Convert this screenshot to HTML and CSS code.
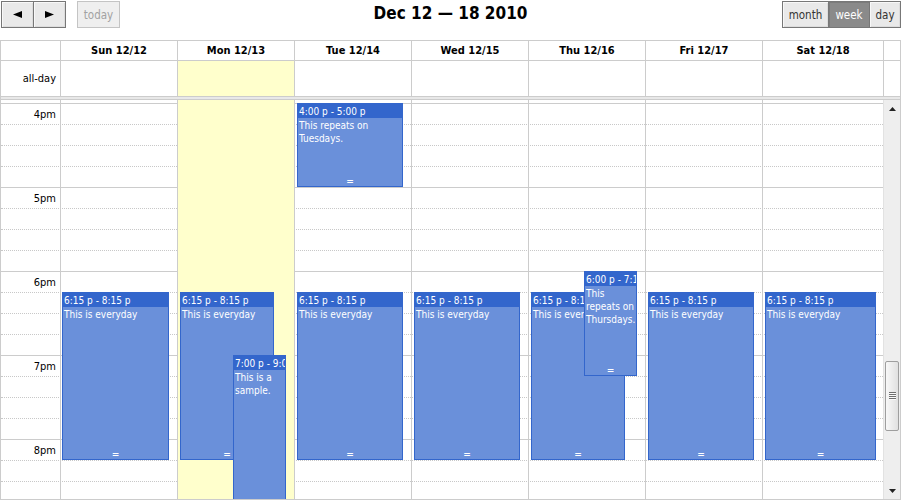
FILE: index.html
```html
<!DOCTYPE html>
<html>
<head>
<meta charset="utf-8">
<title>Calendar</title>
<link rel="stylesheet" href="styles.css">
</head>
<body>
<div class="cal">
  <div class="toolbar">
    <div class="tb-left">
      <div class="group">
        <button class="btn arrow"><svg width="9" height="7" viewBox="0 0 9 7"><polygon points="0,3.5 9,0 9,7" fill="#000"/></svg></button>
        <button class="btn arrow"><svg width="9" height="7" viewBox="0 0 9 7"><polygon points="9,3.5 0,0 0,7" fill="#000"/></svg></button>
      </div>
      <button class="btn btn-today" disabled>today</button>
    </div>
    <h2 class="title">Dec 12 — 18 2010</h2>
    <div class="tb-right group">
      <button class="btn btn-month">month</button>
      <button class="btn btn-week active">week</button>
      <button class="btn btn-day">day</button>
    </div>
  </div>

  <div class="view">
    <div class="row head">
      <div class="axis"></div>
      <div class="cell">Sun 12/12</div>
      <div class="cell">Mon 12/13</div>
      <div class="cell">Tue 12/14</div>
      <div class="cell">Wed 12/15</div>
      <div class="cell">Thu 12/16</div>
      <div class="cell">Fri 12/17</div>
      <div class="cell">Sat 12/18</div>
      <div class="gutter"></div>
    </div>
    <div class="row allday">
      <div class="axis">all-day</div>
      <div class="cell"></div>
      <div class="cell is-today"></div>
      <div class="cell"></div>
      <div class="cell"></div>
      <div class="cell"></div>
      <div class="cell"></div>
      <div class="cell"></div>
      <div class="gutter"></div>
    </div>
    <div class="divider"></div>

    <div class="body">
      <div class="scroller">
        <div class="slots">
          <div class="slot partial"></div>
          <div class="slot hour"><span class="label">4pm</span></div>
          <div class="slot"></div>
          <div class="slot"></div>
          <div class="slot"></div>
          <div class="slot hour"><span class="label">5pm</span></div>
          <div class="slot"></div>
          <div class="slot"></div>
          <div class="slot"></div>
          <div class="slot hour"><span class="label">6pm</span></div>
          <div class="slot"></div>
          <div class="slot"></div>
          <div class="slot"></div>
          <div class="slot hour"><span class="label">7pm</span></div>
          <div class="slot"></div>
          <div class="slot"></div>
          <div class="slot"></div>
          <div class="slot hour"><span class="label">8pm</span></div>
          <div class="slot"></div>
          <div class="slot"></div>
        </div>

        <div class="cols">
          <div class="axis-space"></div>
          <div class="daycol">
            <div class="ev" style="top:192px;height:168px;left:1px;width:107px">
              <div class="ev-time">6:15 p - 8:15 p</div>
              <div class="ev-title">This is everyday</div>
              <div class="ev-handle">=</div>
            </div>
          </div>
          <div class="daycol is-today">
            <div class="ev" style="top:192px;height:168px;left:2px;width:94px">
              <div class="ev-time">6:15 p - 8:15 p</div>
              <div class="ev-title">This is everyday</div>
              <div class="ev-handle">=</div>
            </div>
            <div class="ev" style="top:255px;height:168px;left:55px;width:53px">
              <div class="ev-time">7:00 p - 9:00 p</div>
              <div class="ev-title">This is a sample.</div>
              <div class="ev-handle">=</div>
            </div>
          </div>
          <div class="daycol">
            <div class="ev" style="top:3px;height:84px;left:2px;width:106px">
              <div class="ev-time">4:00 p - 5:00 p</div>
              <div class="ev-title">This repeats on Tuesdays.</div>
              <div class="ev-handle">=</div>
            </div>
            <div class="ev" style="top:192px;height:168px;left:2px;width:106px">
              <div class="ev-time">6:15 p - 8:15 p</div>
              <div class="ev-title">This is everyday</div>
              <div class="ev-handle">=</div>
            </div>
          </div>
          <div class="daycol">
            <div class="ev" style="top:192px;height:168px;left:2px;width:106px">
              <div class="ev-time">6:15 p - 8:15 p</div>
              <div class="ev-title">This is everyday</div>
              <div class="ev-handle">=</div>
            </div>
          </div>
          <div class="daycol">
            <div class="ev" style="top:192px;height:168px;left:2px;width:94px">
              <div class="ev-time">6:15 p - 8:15 p</div>
              <div class="ev-title">This is everyday</div>
              <div class="ev-handle">=</div>
            </div>
            <div class="ev" style="top:171px;height:105px;left:55px;width:53px">
              <div class="ev-time">6:00 p - 7:15 p</div>
              <div class="ev-title">This repeats on Thursdays.</div>
              <div class="ev-handle">=</div>
            </div>
          </div>
          <div class="daycol">
            <div class="ev" style="top:192px;height:168px;left:2px;width:106px">
              <div class="ev-time">6:15 p - 8:15 p</div>
              <div class="ev-title">This is everyday</div>
              <div class="ev-handle">=</div>
            </div>
          </div>
          <div class="daycol">
            <div class="ev" style="top:192px;height:168px;left:2px;width:111px">
              <div class="ev-time">6:15 p - 8:15 p</div>
              <div class="ev-title">This is everyday</div>
              <div class="ev-handle">=</div>
            </div>
          </div>
        </div>
      </div>

      <div class="scrollbar">
        <div class="sb-btn"><svg width="7" height="4" viewBox="0 0 7 4"><polygon points="0,4 3.5,0 7,4" fill="#222"/></svg></div>
        <div class="sb-track">
          <div class="sb-thumb"><div class="sb-grip"></div></div>
        </div>
        <div class="sb-btn"><svg width="7" height="4" viewBox="0 0 7 4"><polygon points="0,0 3.5,4 7,0" fill="#222"/></svg></div>
      </div>
    </div>
  </div>
</div>
</body>
</html>
```

FILE: styles.css
```css
* {
  box-sizing: border-box;
}

html,
body {
  margin: 0;
  padding: 0;
  background: #fff;
}

body {
  font-family: "DejaVu Sans Condensed", "DejaVu Sans", sans-serif;
  font-stretch: condensed;
  font-size: 11px;
  color: #000;
}

.cal {
  width: 901px;
}

/* ---------- toolbar ---------- */
.toolbar {
  display: grid;
  grid-template-columns: 1fr auto 1fr;
  align-items: start;
  height: 40px;
  padding-top: 1px;
}

.tb-left {
  display: flex;
  gap: 11px;
  padding-left: 1px;
}

.tb-right {
  justify-self: end;
}

.group {
  display: flex;
}

.btn {
  height: 27px;
  margin: 0;
  padding: 0;
  border: 1px solid #777;
  background: #e9e9e9;
  box-shadow: inset 1px 1px 0 #f8f8f8, inset -1px -1px 0 #dcdcdc;
  font-family: "DejaVu Sans Condensed", "DejaVu Sans", sans-serif;
  font-stretch: condensed;
  font-size: 11.5px;
  color: #333;
  text-align: center;
  display: flex;
  align-items: center;
  justify-content: center;
}

.group .btn + .btn {
  margin-left: -1px;
}

.arrow {
  width: 33px;
}

.btn-today {
  width: 43px;
  border-color: #c4c4c4;
  background: #efefef;
  color: #a2a2a2;
  box-shadow: none;
}

.btn-month {
  width: 47px;
}

.btn-week {
  width: 42px;
}

.btn-day {
  width: 32px;
}

.btn.active {
  background: #8a8a8a;
  color: #fff;
  box-shadow: inset 1px 1px 0 #7c7c7c;
}

.title {
  margin: -1px 0 0;
  font-size: 17px;
  font-weight: bold;
  line-height: 26px;
  color: #000;
}

/* ---------- view ---------- */
.view {
  width: 901px;
  border: 1px solid #ccc;
}

.row {
  display: grid;
  grid-template-columns: 59px repeat(6, 117px) 121px 17px;
}

.row > div + div {
  border-left: 1px solid #ccc;
}

.head {
  height: 20px;
  border-bottom: 1px solid #ccc;
}

.head .cell {
  font-weight: bold;
  text-align: center;
  line-height: 19px;
}

.allday {
  height: 36px;
  border-bottom: 1px solid #ccc;
}

.axis {
  text-align: right;
  padding-right: 4px;
  line-height: 35px;
}

.cell.is-today {
  background: #ffc;
}

.divider {
  height: 3px;
  background: #e8e8e8;
  border-bottom: 1px solid #ccc;
}

.body {
  display: flex;
  height: 399px;
}

.scroller {
  width: 882px;
  height: 399px;
  overflow: hidden;
  display: grid;
  grid-template-columns: 59px repeat(6, 117px) 121px;
  grid-template-rows: 399px;
}

.slots {
  grid-area: 1 / 1 / 2 / -1;
}

.slot {
  height: 21px;
  border-top: 1px dotted #c8c8c8;
}

.slot.hour {
  border-top: 1px solid #ccc;
}

.slot.partial {
  height: 3px;
  border-top: none;
}

.label {
  display: block;
  width: 59px;
  text-align: right;
  padding: 1px 4px 0 0;
  line-height: 20px;
}

.cols {
  grid-area: 1 / 1 / 2 / -1;
  display: grid;
  grid-template-columns: 59px repeat(6, 117px) 121px;
}

.daycol {
  position: relative;
  border-left: 1px solid #ccc;
}

.daycol.is-today {
  background: #ffc;
}

/* ---------- events ---------- */
.ev {
  position: absolute;
  border: 1px solid #36c;
  background: #6a90da;
  color: #fff;
  overflow: hidden;
  font-size: 10px;
}

.ev-time {
  background: #36c;
  height: 14px;
  line-height: 14px;
  padding: 1px 1px 0;
  white-space: nowrap;
  overflow: hidden;
}

.ev-title {
  line-height: 13px;
  padding: 1px 1px 0;
}

.ev-handle {
  position: absolute;
  left: 0;
  right: 0;
  bottom: 0;
  height: 8px;
  line-height: 8px;
  text-align: center;
  font-family: "DejaVu Sans Mono", monospace;
  font-size: 11px;
}

/* ---------- scrollbar ---------- */
.scrollbar {
  width: 17px;
  flex: none;
  display: flex;
  flex-direction: column;
  background: #eeeeee;
  border-left: 1px solid #e2e2e2;
}

.sb-btn {
  height: 17px;
  flex: none;
  display: flex;
  align-items: center;
  justify-content: center;
}

.sb-track {
  flex: 1;
  padding-top: 244px;
}

.sb-thumb {
  height: 70px;
  margin: 0 1px;
  border: 1px solid #9e9e9e;
  border-radius: 2px;
  background: linear-gradient(to right, #f8f8f8, #e0e0e0);
  display: flex;
  align-items: center;
  justify-content: center;
}

.sb-grip {
  width: 7px;
  height: 8px;
  background: repeating-linear-gradient(to bottom, #6f6f6f 0 1px, #fafafa 1px 2px);
}
```
